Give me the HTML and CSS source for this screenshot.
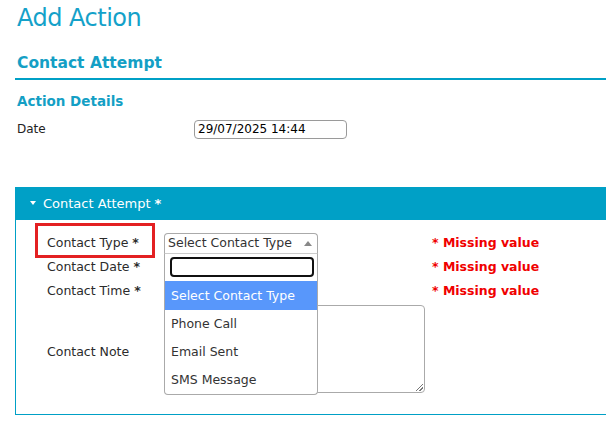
FILE: index.html
```html
<!DOCTYPE html>
<html>
<head>
<meta charset="utf-8">
<link rel="stylesheet" href="styles.css">
</head>
<body>
<div class="page">
  <h1 class="title">Add Action</h1>
  <h2 class="section">Contact Attempt</h2>
  <h3 class="subsection">Action Details</h3>
  <div class="date-row">
    <span class="date-label">Date</span>
    <span class="date-input">29/07/2025 14:44</span>
  </div>

  <div class="panel">
    <div class="panel-head"><span class="caret"></span>Contact Attempt <b class="star">*</b></div>
    <div class="panel-body">
      <div class="label type-label">Contact Type <b class="star">*</b><span class="highlight-box"></span></div>
      <div class="control">
        <div class="select">
          <span>Select Contact Type</span>
          <span class="arrow"></span>
          <div class="dropdown">
            <div class="search"></div>
            <div class="option active">Select Contact Type</div>
            <div class="option">Phone Call</div>
            <div class="option">Email Sent</div>
            <div class="option">SMS Message</div>
          </div>
        </div>
      </div>
      <div class="missing">* Missing value</div>

      <div class="label">Contact Date <b class="star">*</b></div>
      <div class="control"></div>
      <div class="missing">* Missing value</div>

      <div class="label">Contact Time <b class="star">*</b></div>
      <div class="control"></div>
      <div class="missing">* Missing value</div>

      <div class="label note-label">Contact Note</div>
      <div class="control note-control"><div class="textarea"><span class="grip"></span></div></div>
      <div></div>
    </div>
  </div>
</div>
</body>
</html>
```

FILE: styles.css
```css
html, body {
  margin: 0;
  padding: 0;
  background: #fff;
  overflow: hidden;
}
body {
  font-family: "DejaVu Sans", Verdana, sans-serif;
  font-size: 12px;
  color: #222;
}
.page {
  width: 640px;
  padding-left: 15px;
}
.title {
  margin: 0;
  padding: 3px 0 0 2px;
  height: 38px;
  font-family: "DejaVu Sans", sans-serif;
  font-weight: normal;
  font-size: 24px;
  line-height: 30px;
  color: #14a1c9;
  letter-spacing: -0.5px;
}
.section {
  margin: 0;
  padding: 13px 0 6px 2px;
  font-size: 15.5px;
  line-height: 18px;
  font-weight: bold;
  color: #149fc5;
  border-bottom: 2px solid #00a0c6;
}
.subsection {
  margin: 0;
  padding: 13px 0 0 2px;
  font-size: 13.5px;
  line-height: 16px;
  font-weight: bold;
  color: #149fc5;
}
.date-row {
  display: flex;
  align-items: center;
  padding: 10px 0 0 2px;
  height: 20px;
}
.date-label {
  width: 177px;
  font-size: 12px;
}
.date-input {
  box-sizing: border-box;
  width: 153px;
  height: 19px;
  border: 1px solid #9a9a9a;
  border-radius: 4px;
  padding: 0 0 0 3px;
  font-size: 12px;
  line-height: 17px;
  color: #000;
}
.panel {
  margin-top: 48px;
  border: 1px solid #00a0c6;
  border-right: none;
  width: 620px;
}
.panel-head {
  height: 32px;
  background: #00a0c6;
  color: #fff;
  font-size: 13px;
  line-height: 30px;
  padding-left: 14px;
  display: flex;
  align-items: center;
}
.panel-head .star {
  margin-left: 4px;
}
.caret {
  width: 0;
  height: 0;
  border-left: 3.5px solid transparent;
  border-right: 3.5px solid transparent;
  border-top: 4px solid #fff;
  margin-right: 7px;
  margin-top: -2px;
}
.panel-body {
  display: grid;
  grid-template-columns: 117px 268px 1fr;
  grid-template-rows: 24px 24px 24px 91px;
  padding: 10px 0 21px 31px;
  align-items: center;
}
.label {
  font-size: 12.5px;
  color: #2b2b2b;
  position: relative;
}
.star {
  font-weight: bold;
}
.highlight-box {
  position: absolute;
  left: -12px;
  top: -12px;
  width: 114px;
  height: 29px;
  border: 3px solid #e32022;
}
.control {
  height: 24px;
  position: relative;
}
.select {
  position: relative;
  box-sizing: border-box;
  width: 154px;
  height: 20px;
  margin-top: 3px;
  border: 1px solid #aaa;
  border-bottom: none;
  border-radius: 4px 4px 0 0;
  padding-left: 3px;
  font-size: 12.5px;
  line-height: 18px;
  color: #333;
  z-index: 2;
}
.arrow {
  position: absolute;
  right: 5px;
  top: 7px;
  width: 0;
  height: 0;
  border-left: 4px solid transparent;
  border-right: 4px solid transparent;
  border-bottom: 5px solid #888;
}
.dropdown {
  position: absolute;
  left: -1px;
  top: 19px;
  width: 154px;
  box-sizing: border-box;
  border: 1px solid #aaa;
  border-top: 1px solid #ccc;
  border-radius: 0 0 4px 4px;
  background: #fff;
  padding-top: 3px;
}
.search {
  box-sizing: border-box;
  width: 144px;
  height: 20px;
  margin: 0 0 4px 5px;
  border: 2px solid #111;
  border-radius: 4px;
}
.option {
  height: 28px;
  line-height: 28px;
  padding-left: 6px;
  font-size: 12.5px;
  color: #333;
}
.option.active {
  background: #5897fb;
  color: #fff;
  height: 29px;
  line-height: 29px;
}
.missing {
  color: #f00000;
  font-weight: bold;
  font-size: 12.5px;
}
.panel-body > .note-label {
  padding-top: 7px;
}
.panel-body .note-control {
  height: 88px;
  margin-top: 3px;
}
.textarea {
  box-sizing: border-box;
  width: 261px;
  height: 88px;
  border: 1px solid #aaa;
  border-radius: 4px;
  position: relative;
}
.grip {
  position: absolute;
  right: 1px;
  bottom: 1px;
  width: 7px;
  height: 7px;
  background: linear-gradient(135deg, transparent 45%, #777 45%, #777 55%, transparent 55%, transparent 70%, #777 70%, #777 80%, transparent 80%);
}
```
